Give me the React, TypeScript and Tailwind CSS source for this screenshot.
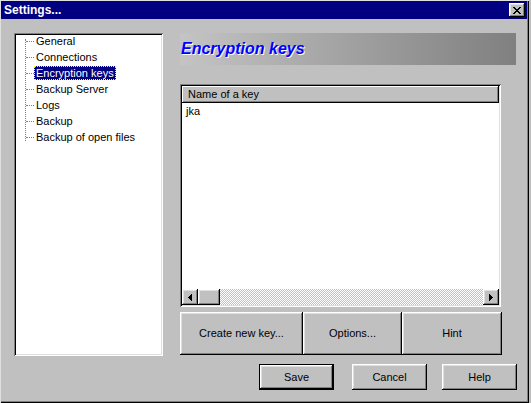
import React from "react";

const raised =
  "shadow-[inset_-1px_-1px_#000,inset_1px_1px_#fff,inset_-2px_-2px_#808080,inset_2px_2px_#dfdfdf]";
const sunken =
  "shadow-[inset_1px_1px_#808080,inset_-1px_-1px_#fff,inset_2px_2px_#000,inset_-2px_-2px_#dfdfdf]";

const closeX = [
  "11....11",
  ".11..11.",
  "..1111..",
  "...11...",
  "..1111..",
  ".11..11.",
  "11....11",
];

function CloseGlyph() {
  const rects: React.ReactNode[] = [];
  closeX.forEach((row, y) =>
    row.split("").forEach((c, x) => {
      if (c === "1") rects.push(<rect key={`${x}-${y}`} x={x} y={y} width={1} height={1} fill="#000" />);
    })
  );
  return (
    <svg width="8" height="7" viewBox="0 0 8 7" shapeRendering="crispEdges">
      {rects}
    </svg>
  );
}

const treeItems = [
  "General",
  "Connections",
  "Encryption keys",
  "Backup Server",
  "Logs",
  "Backup",
  "Backup of open files",
];

function Button({ label, className = "" }: { label: string; className?: string }) {
  return (
    <div className={`flex items-center justify-center bg-[#c0c0c0] text-[11px] text-black ${raised} ${className}`}>
      {label}
    </div>
  );
}

export default function App() {
  return (
    <div className="w-[531px] h-[403px] bg-[#c0c0c0] font-['Liberation_Sans',Arial,sans-serif] text-black select-none">
      <div className="w-[529px] h-[403px] flex flex-col bg-[#c0c0c0] shadow-[inset_1px_1px_#dfdfdf,inset_-1px_-1px_#000,inset_-2px_-2px_#808080]">
        {/* Title bar */}
        <div className="ml-[1px] mt-[1px] w-[526px] h-[18px] bg-[#000080] flex items-center justify-between pl-[3px] pr-[2px]">
          <span className="text-white font-bold text-[12px] leading-none">Settings...</span>
          <div className={`w-[16px] h-[14px] flex items-center justify-center bg-[#c0c0c0] ${raised}`}>
            <CloseGlyph />
          </div>
        </div>

        {/* Main area */}
        <div className="flex mt-[14px] pl-[14px]">
          {/* Tree */}
          <div className={`relative w-[149px] h-[323px] bg-white ${sunken}`}>
            <div className="absolute left-[11px] top-[6px] h-[102px] border-l border-dotted border-[#808080]" />
            {treeItems.map((item) => {
              const selected = item === "Encryption keys";
              return (
                <div key={item} className="h-[16px] flex items-center">
                  <div className="ml-[12px] w-[8px] border-t border-dotted border-[#808080]" />
                  <span
                    className={`text-[11px] leading-[14px] px-[2px] ${
                      selected
                        ? "bg-[#000080] text-white outline outline-1 outline-dotted outline-[#ffff00] -outline-offset-1"
                        : ""
                    }`}
                  >
                    {item}
                  </span>
                </div>
              );
            })}
          </div>

          {/* Right column */}
          <div className="ml-[17px] w-[336px] flex flex-col">
            <div className="h-[32px] bg-linear-to-r from-[#c4c4c4] to-[#808080] flex items-center pl-[1px]">
              <span className="text-[16px] font-bold italic text-[#0000ff] [text-shadow:1px_1px_0_#fff] leading-none">
                Encryption keys
              </span>
            </div>

            {/* List */}
            <div className={`mt-[19px] w-[321px] h-[223px] bg-white ${sunken} p-[2px] flex flex-col`}>
              <div className={`h-[17px] bg-[#c0c0c0] flex items-center pl-[6px] text-[11px] shadow-[inset_-1px_-1px_#000,inset_1px_1px_#fff,inset_-2px_-2px_#808080]`}>
                Name of a key
              </div>
              <div className="flex-1 bg-white pl-[4px] pt-[1px] text-[11px] leading-[14px]">jka</div>
              <div className="h-[16px] flex bg-[repeating-conic-gradient(#fff_0%_25%,#c0c0c0_0%_50%)] bg-[length:2px_2px]">
                <div className={`w-[16px] h-[16px] bg-[#c0c0c0] flex items-center justify-center ${raised}`}>
                  <svg width="4" height="7" viewBox="0 0 4 7" shapeRendering="crispEdges">
                    <polygon points="4,0 0,3.5 4,7" fill="#000" />
                  </svg>
                </div>
                <div className={`w-[22px] h-[16px] bg-[#c0c0c0] ${raised}`} />
                <div className="flex-1" />
                <div className={`w-[16px] h-[16px] bg-[#c0c0c0] flex items-center justify-center ${raised}`}>
                  <svg width="4" height="7" viewBox="0 0 4 7" shapeRendering="crispEdges">
                    <polygon points="0,0 4,3.5 0,7" fill="#000" />
                  </svg>
                </div>
              </div>
            </div>

            {/* Action buttons */}
            <div className="mt-[5px] flex h-[43px]">
              <Button label="Create new key..." className="w-[123px] h-[43px]" />
              <Button label="Options..." className="w-[99px] h-[43px]" />
              <Button label="Hint" className="w-[100px] h-[43px]" />
            </div>
          </div>
        </div>

        {/* Bottom buttons */}
        <div className="flex mt-[8px] pl-[259px]">
          <div className="w-[75px] h-[26px] border border-black flex">
            <Button label="Save" className="flex-1" />
          </div>
          <Button label="Cancel" className="ml-[18px] w-[75px] h-[26px]" />
          <Button label="Help" className="ml-[15px] w-[75px] h-[26px]" />
        </div>
      </div>
    </div>
  );
}
